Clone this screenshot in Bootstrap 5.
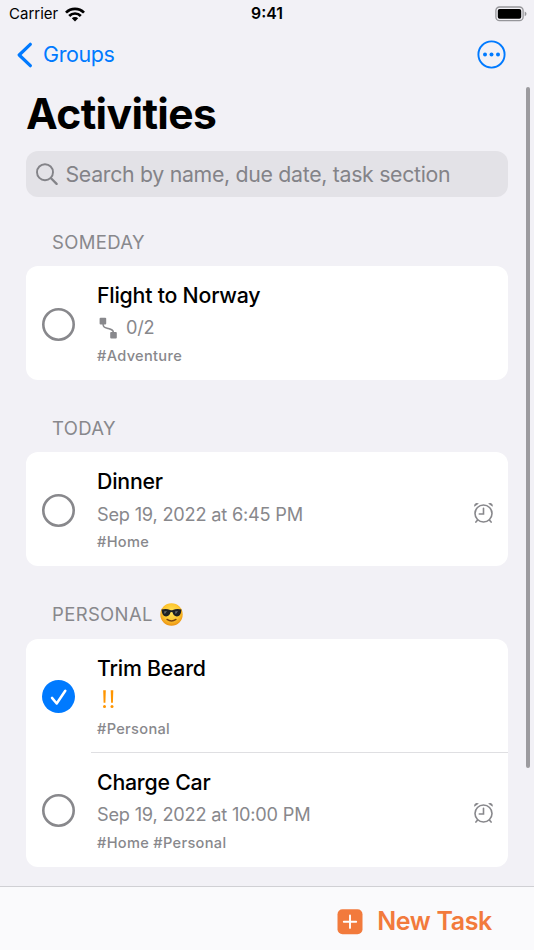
<!DOCTYPE html>
<html lang="en">
<head>
<meta charset="utf-8">
<meta name="viewport" content="width=device-width, initial-scale=1">
<title>Activities</title>
<link href="https://cdn.jsdelivr.net/npm/bootstrap@5.3.0/dist/css/bootstrap.min.css" rel="stylesheet">
<style>
  :root { --ios-gray: #88888c; --ios-blue: #007aff; --ios-orange: #f27a3c; }
  body { font-family: Inter, "Liberation Sans", sans-serif; background: #f2f1f6; color: #000; height: 950px; overflow: hidden; }
  svg { display: block; flex: none; }
  .screen { height: 950px; }
  .status { height: 28px; font-size: 15px; line-height: 28px; padding: 0 9px; }
  .status > * { flex: 1 1 0; }
  .wifi { margin-left: 6.5px; }
  .battery { margin-right: -2px; }
  .clock { font-weight: 600; font-size: 15.8px; }
  .topbar { height: 53px; padding: 0 28px 0 17px; color: var(--ios-blue); font-size: 21.5px; letter-spacing: -.4px; }
  .back { color: inherit; gap: 10px; }
  .big-title { font-size: 42.6px; font-weight: 700; line-height: 66px; height: 70.3px; padding-left: 26px; letter-spacing: -.62px; }
  .search { height: 46px; margin: 0 26px; padding-left: 10px; border-radius: 12px; background: #e3e2e7; color: #838388; font-size: 21.3px; letter-spacing: -.31px; gap: 7.5px; }
  .search-label { padding-top: 1px; }
  .sect { height: 49px; margin: 23.2px 0 0 52px; font-size: 18.5px; letter-spacing: .35px; color: var(--ios-gray); gap: 7.5px; }
  .sect.first { margin-top: 20px; }
  .tasks { margin: 0 26px; border-radius: 12px; background: #fff; }
  .task { height: 114px; padding-left: 16px; }
  .check { margin-top: 2px; }
  .task-body { margin-left: 15.500px; padding: 15px 14px 0 6.500px; height: 114px; }
  .ruled { border-bottom: 1px solid #dfdfe2; }
  .t-name { font-size: 21.3px; line-height: 28px; font-weight: 500; letter-spacing: -.22px; }
  .t-sub { font-size: 18.2px; height: 36px; padding-top: 1.5px; letter-spacing: -.21px; color: var(--ios-gray); }
  .alarm { margin-bottom: 2.5px; }
  .bang { margin-bottom: 4px; }
  .t-tag { font-size: 14.6px; line-height: 22px; font-weight: 500; letter-spacing: .32px; color: var(--ios-gray); }
  .scroller { position: absolute; right: 4px; top: 86.500px; width: 4px; height: 681px; border-radius: 2px; background: #9c9b9f; }
  .bottombar { height: 64px; border-top: 1px solid #d0d0d4; background: #fafafc; color: var(--ios-orange); font-size: 25px; font-weight: 600; letter-spacing: -.35px; padding: 6px 42px 0 0; gap: 14.500px; }
</style>
</head>
<body>
<div class="screen d-flex flex-column position-relative">
  <header class="status d-flex align-items-center">
    <div class="d-flex align-items-center"><span class="carrier">Carrier</span>
      <svg class="wifi" width="20" height="15" viewBox="0 0 20 15"><g fill="none" stroke="#000" stroke-width="2.7"><path d="M1 5.600a12.600 12.600 0 0 1 18 0"/><path d="M4.200 9a8 8 0 0 1 11.600 0"/></g><path d="M10 14.400 6.800 11.200a4.600 4.600 0 0 1 6.400 0Z"/></svg>
    </div>
    <div class="text-center"><span class="clock">9:41</span></div>
    <div class="d-flex justify-content-end">
      <svg class="battery" width="32" height="16" viewBox="0 0 32 16"><rect x=".9" y="1" width="27.200" height="13.600" rx="3.600" fill="none" stroke="#96969a" stroke-width="1.300"/><rect x="2.800" y="2.900" width="23.400" height="9.800" rx="1.800"/><path d="M29.700 5.400q1.800.7 1.800 2.400t-1.800 2.400Z" fill="#96969a"/></svg>
    </div>
  </header>

  <nav class="topbar d-flex align-items-center justify-content-between">
    <a class="back d-flex align-items-center text-decoration-none" href="#">
      <svg width="16" height="26" viewBox="0 0 16 26"><path d="M13.300 2.300 2.200 13l11.100 10.700" fill="none" stroke="#007aff" stroke-width="3.200" stroke-linecap="round" stroke-linejoin="round"/></svg>
      <span class="back-label">Groups</span>
    </a>
    <svg width="29" height="29" viewBox="0 0 29 29" fill="#007aff"><circle cx="14.500" cy="14.500" r="13.100" fill="none" stroke="#007aff" stroke-width="1.900"/><circle cx="8" cy="14.500" r="2"/><circle cx="14.500" cy="14.500" r="2"/><circle cx="21" cy="14.500" r="2"/></svg>
  </nav>

  <div><h1 class="big-title m-0"><span>Activities</span></h1></div>

  <div class="search d-flex align-items-center">
    <svg width="22" height="23" viewBox="0 0 22 23"><g fill="none" stroke="#838388" stroke-linecap="round"><circle cx="9" cy="9.200" r="8" stroke-width="1.900"/><path d="m15 15.300 5.600 5.600" stroke-width="2.300"/></g></svg>
    <span class="search-label">Search by name, due date, task section</span>
  </div>

  <h2 class="sect first fw-normal d-flex align-items-center mb-0"><span>SOMEDAY</span></h2>
  <div class="tasks">
    <div class="task d-flex align-items-center">
      <svg class="check" width="33" height="33" viewBox="0 0 33 33"><circle cx="16.500" cy="16.500" r="15.200" fill="none" stroke="#88888c" stroke-width="2.600"/></svg>
      <div class="task-body flex-fill">
        <div class="t-name"><span>Flight to Norway</span></div>
        <div class="t-sub d-flex align-items-center">
          <svg class="me-2" width="21" height="22" viewBox="0 0 21 22"><rect x="2.600" y=".8" width="6.600" height="6.600" rx="1" fill="#88888c"/><rect x="13.200" y="15" width="6.600" height="6.600" rx="1" fill="#88888c"/><path d="M6 6.500c0 4 2.100 4.100 5.200 5s5.300 1.500 5.300 4.500" fill="none" stroke="#88888c" stroke-width="1.500"/></svg>
          <span>0/2</span>
        </div>
        <div class="t-tag"><span>#Adventure</span></div>
      </div>
    </div>
  </div>

  <h2 class="sect fw-normal d-flex align-items-center mb-0"><span>TODAY</span></h2>
  <div class="tasks">
    <div class="task d-flex align-items-center">
      <svg class="check" width="33" height="33" viewBox="0 0 33 33"><circle cx="16.500" cy="16.500" r="15.200" fill="none" stroke="#88888c" stroke-width="2.600"/></svg>
      <div class="task-body flex-fill">
        <div class="t-name"><span>Dinner</span></div>
        <div class="t-sub d-flex align-items-center justify-content-between">
          <span>Sep 19, 2022 at 6:45 PM</span>
          <svg class="alarm" width="21" height="22" viewBox="0 0 21 22"><g fill="none" stroke="#88888c" stroke-width="1.600" stroke-linecap="round"><circle cx="10.500" cy="11.500" r="8.500"/><path d="M10.500 6.200v5.800H6.300M4.400 18.200l-1.500 1.900M16.600 18.200l1.500 1.900"/></g><path d="M1.400 4.800C.4 2 3.400 0 5.900 1.600ZM19.600 4.800c1-2.800-2-4.800-4.500-3.200Z" fill="#88888c"/></svg>
        </div>
        <div class="t-tag"><span>#Home</span></div>
      </div>
    </div>
  </div>

  <h2 class="sect fw-normal d-flex align-items-center mb-0"><span>PERSONAL</span>
    <svg width="23" height="23" viewBox="0 0 23 23"><defs><radialGradient id="face" cx=".5" cy=".4" r=".62"><stop offset="0" stop-color="#ffe45c"/><stop offset=".6" stop-color="#fdc62f"/><stop offset="1" stop-color="#ea8d10"/></radialGradient></defs><circle cx="11.500" cy="11.500" r="11.200" fill="url(#face)"/><path d="M1.500 6.500q5-1 8.600.4 1.400.5 2.800 0 3.600-1.400 8.600-.4l-.3 1.800q-.4 5-4.200 5.100-3.600.1-4.500-4.100-1-.6-2 0Q9.600 13.500 6 13.400q-3.800-.1-4.200-5.100Z" fill="#1d2024"/><path d="m4 8.500 3-.6-2.300 3.400ZM15 8.500l3-.6-2.300 3.400Z" fill="#666b70"/><path d="M7 16.400q4.500 3.200 9 0" fill="none" stroke="#7a4310" stroke-width="1.300" stroke-linecap="round"/></svg>
  </h2>
  <div class="tasks">
    <div class="task d-flex align-items-center">
      <svg class="check" width="33" height="33" viewBox="0 0 33 33"><circle cx="16.500" cy="16.500" r="16.500" fill="#007aff"/><path d="m10 17.900 4.700 5.600 8.600-12.800" fill="none" stroke="#fff" stroke-width="2.500" stroke-linecap="round" stroke-linejoin="round"/></svg>
      <div class="task-body flex-fill ruled">
        <div class="t-name"><span>Trim Beard</span></div>
        <div class="t-sub d-flex align-items-center">
          <svg class="bang" width="21" height="22" viewBox="0 0 21 22" fill="#ff9500"><path d="M6.200 3.200h2.600l-.4 12.500H6.600ZM13.700 3.200h2.600l-.4 12.500h-1.800Z"/><circle cx="7.500" cy="19.600" r="1.500"/><circle cx="15" cy="19.600" r="1.500"/></svg>
        </div>
        <div class="t-tag"><span>#Personal</span></div>
      </div>
    </div>
    <div class="task d-flex align-items-center">
      <svg class="check" width="33" height="33" viewBox="0 0 33 33"><circle cx="16.500" cy="16.500" r="15.200" fill="none" stroke="#88888c" stroke-width="2.600"/></svg>
      <div class="task-body flex-fill">
        <div class="t-name"><span>Charge Car</span></div>
        <div class="t-sub d-flex align-items-center justify-content-between">
          <span>Sep 19, 2022 at 10:00 PM</span>
          <svg class="alarm" width="21" height="22" viewBox="0 0 21 22"><g fill="none" stroke="#88888c" stroke-width="1.600" stroke-linecap="round"><circle cx="10.500" cy="11.500" r="8.500"/><path d="M10.500 6.200v5.800H6.300M4.400 18.200l-1.500 1.900M16.600 18.200l1.500 1.900"/></g><path d="M1.400 4.800C.4 2 3.400 0 5.900 1.600ZM19.600 4.800c1-2.800-2-4.800-4.500-3.200Z" fill="#88888c"/></svg>
        </div>
        <div class="t-tag"><span>#Home #Personal</span></div>
      </div>
    </div>
  </div>

  <div class="scroller"></div>
  <footer class="bottombar mt-auto d-flex align-items-center justify-content-end">
    <svg width="26" height="26" viewBox="0 0 26 26"><rect x=".5" y=".2" width="25" height="25" rx="5" fill="#f27a3c"/><path d="M13 6.500v12.400M6.800 12.700h12.400" stroke="#fff" stroke-width="1.900" stroke-linecap="round"/></svg>
    <span>New Task</span>
  </footer>
</div>
</body>
</html>
